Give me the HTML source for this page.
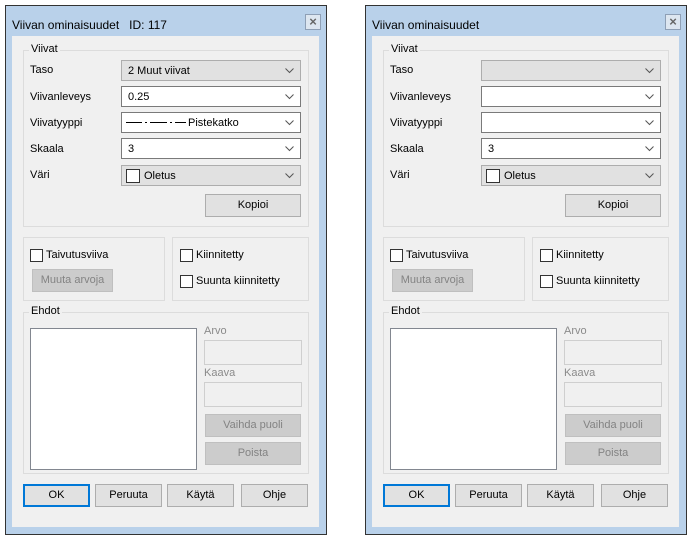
<!DOCTYPE html>
<html><head><meta charset="utf-8"><style>
*{box-sizing:border-box;margin:0;padding:0}
body{width:694px;height:541px;background:#fff;position:relative;overflow:hidden;font-family:"Liberation Sans",Arial,sans-serif;font-size:11px;color:#000}
.dlg{position:absolute;top:5px;width:322px;height:530px;border:1px solid #333;background:#b9d1ea}
.a{position:absolute}
.t{position:absolute;left:6px;top:12px;font-size:12px}
.x{position:absolute;left:299px;top:8px;width:16px;height:16px;border:1px solid #8e9fb5;background:#dde6f0;font-size:13px;line-height:13px;text-align:center;color:#666;font-weight:bold}
.gb{position:absolute;border:1px solid #dcdcdc}
.gl{position:absolute;background:#f0f0f0;padding:0 2px;top:-8px;left:5px}
.cb{position:absolute;width:180px;height:21px;border:1px solid #7a7a7a;background:#fff;padding:3px 6px;line-height:14px}
.cb.g{background:#e1e1e1;border-color:#adadad}
.cb svg.ar{position:absolute;right:6px;top:7px}
.btn{position:absolute;height:23px;border:1px solid #adadad;background:#e1e1e1;text-align:center;line-height:21px}
.btn.d{background:#cccccc;border-color:#bfbfbf;color:#838383}
.chk{position:absolute;width:13px;height:13px;border:1px solid #333;background:#fff}
.dis{color:#8a8a8a}
.tb{position:absolute;width:98px;height:25px;border:1px solid #cfcfcf;background:#f0f0f0}
</style></head><body>

<div class="dlg" style="left:5px">
<div class="t">Viivan ominaisuudet &nbsp; ID: 117</div>
<div class="x">×</div>
</div>
<div class="dlg" style="left:365px">
<div class="t">Viivan ominaisuudet</div>
<div class="x">×</div>
</div>

<div class="a" style="left:0;top:0;width:330px;height:541px">
<div class="a" style="left:12px;top:36px;width:307px;height:491px;background:#f0f0f0"></div>
<div class="gb" style="left:23px;top:50px;width:286px;height:177px"><span class="gl">Viivat</span></div>
<div class="a" style="left:30px;top:64px">Taso</div>
<div class="a" style="left:30px;top:91px">Viivanleveys</div>
<div class="a" style="left:30px;top:117px">Viivatyyppi</div>
<div class="a" style="left:30px;top:143px">Skaala</div>
<div class="a" style="left:30px;top:169px">Väri</div>
<div class="cb g" style="left:121px;top:60px">2 Muut viivat<svg class="ar" width="9" height="6"><path d="M0.5 0.5L4.5 4.5L8.5 0.5" fill="none" stroke="#555"/></svg></div>
<div class="cb" style="left:121px;top:86px">0.25<svg class="ar" width="9" height="6"><path d="M0.5 0.5L4.5 4.5L8.5 0.5" fill="none" stroke="#555"/></svg></div>
<div class="cb" style="left:121px;top:112px"><svg width="60" height="4" style="position:absolute;left:4px;top:8px"><path d="M0 1.5H16M19 1.5H21M24 1.5H41M44 1.5H46M49 1.5H60" stroke="#000" stroke-width="1"/></svg><span style="position:absolute;left:66px;top:3px">Pistekatko</span><svg class="ar" width="9" height="6"><path d="M0.5 0.5L4.5 4.5L8.5 0.5" fill="none" stroke="#555"/></svg></div>
<div class="cb" style="left:121px;top:138px">3<svg class="ar" width="9" height="6"><path d="M0.5 0.5L4.5 4.5L8.5 0.5" fill="none" stroke="#555"/></svg></div>
<div class="cb g" style="left:121px;top:165px;padding-left:22px">Oletus<span class="chk" style="left:4px;top:3px;width:14px;height:14px"></span><svg class="ar" width="9" height="6"><path d="M0.5 0.5L4.5 4.5L8.5 0.5" fill="none" stroke="#555"/></svg></div>
<div class="btn" style="left:205px;top:194px;width:96px">Kopioi</div>
<div class="gb" style="left:23px;top:237px;width:142px;height:64px"></div>
<div class="gb" style="left:172px;top:237px;width:137px;height:64px"></div>
<div class="chk" style="left:30px;top:249px"></div><div class="a" style="left:46px;top:249px">Taivutusviiva</div>
<div class="btn d" style="left:32px;top:269px;width:81px">Muuta arvoja</div>
<div class="chk" style="left:180px;top:249px"></div><div class="a" style="left:196px;top:249px">Kiinnitetty</div>
<div class="chk" style="left:180px;top:275px"></div><div class="a" style="left:196px;top:275px">Suunta kiinnitetty</div>
<div class="gb" style="left:23px;top:312px;width:286px;height:162px"><span class="gl">Ehdot</span></div>
<div class="a" style="left:30px;top:328px;width:167px;height:142px;border:1px solid #828790;background:#fff"></div>
<div class="a dis" style="left:204px;top:325px">Arvo</div>
<div class="tb" style="left:204px;top:340px"></div>
<div class="a dis" style="left:204px;top:367px">Kaava</div>
<div class="tb" style="left:204px;top:382px"></div>
<div class="btn d" style="left:205px;top:414px;width:96px">Vaihda puoli</div>
<div class="btn d" style="left:205px;top:442px;width:96px">Poista</div>
<div class="btn" style="left:23px;top:484px;width:67px;border:2px solid #0078d7;line-height:19px">OK</div>
<div class="btn" style="left:95px;top:484px;width:67px">Peruuta</div>
<div class="btn" style="left:167px;top:484px;width:67px">Käytä</div>
<div class="btn" style="left:241px;top:484px;width:67px">Ohje</div>
</div>

<div class="a" style="left:360px;top:0;width:330px;height:541px">
<div class="a" style="left:12px;top:36px;width:307px;height:491px;background:#f0f0f0"></div>
<div class="gb" style="left:23px;top:50px;width:286px;height:177px"><span class="gl">Viivat</span></div>
<div class="a" style="left:30px;top:64px">Taso</div>
<div class="a" style="left:30px;top:91px">Viivanleveys</div>
<div class="a" style="left:30px;top:117px">Viivatyyppi</div>
<div class="a" style="left:30px;top:143px">Skaala</div>
<div class="a" style="left:30px;top:169px">Väri</div>
<div class="cb g" style="left:121px;top:60px"><svg class="ar" width="9" height="6"><path d="M0.5 0.5L4.5 4.5L8.5 0.5" fill="none" stroke="#555"/></svg></div>
<div class="cb" style="left:121px;top:86px"><svg class="ar" width="9" height="6"><path d="M0.5 0.5L4.5 4.5L8.5 0.5" fill="none" stroke="#555"/></svg></div>
<div class="cb" style="left:121px;top:112px"><svg class="ar" width="9" height="6"><path d="M0.5 0.5L4.5 4.5L8.5 0.5" fill="none" stroke="#555"/></svg></div>
<div class="cb" style="left:121px;top:138px">3<svg class="ar" width="9" height="6"><path d="M0.5 0.5L4.5 4.5L8.5 0.5" fill="none" stroke="#555"/></svg></div>
<div class="cb g" style="left:121px;top:165px;padding-left:22px">Oletus<span class="chk" style="left:4px;top:3px;width:14px;height:14px"></span><svg class="ar" width="9" height="6"><path d="M0.5 0.5L4.5 4.5L8.5 0.5" fill="none" stroke="#555"/></svg></div>
<div class="btn" style="left:205px;top:194px;width:96px">Kopioi</div>
<div class="gb" style="left:23px;top:237px;width:142px;height:64px"></div>
<div class="gb" style="left:172px;top:237px;width:137px;height:64px"></div>
<div class="chk" style="left:30px;top:249px"></div><div class="a" style="left:46px;top:249px">Taivutusviiva</div>
<div class="btn d" style="left:32px;top:269px;width:81px">Muuta arvoja</div>
<div class="chk" style="left:180px;top:249px"></div><div class="a" style="left:196px;top:249px">Kiinnitetty</div>
<div class="chk" style="left:180px;top:275px"></div><div class="a" style="left:196px;top:275px">Suunta kiinnitetty</div>
<div class="gb" style="left:23px;top:312px;width:286px;height:162px"><span class="gl">Ehdot</span></div>
<div class="a" style="left:30px;top:328px;width:167px;height:142px;border:1px solid #828790;background:#fff"></div>
<div class="a dis" style="left:204px;top:325px">Arvo</div>
<div class="tb" style="left:204px;top:340px"></div>
<div class="a dis" style="left:204px;top:367px">Kaava</div>
<div class="tb" style="left:204px;top:382px"></div>
<div class="btn d" style="left:205px;top:414px;width:96px">Vaihda puoli</div>
<div class="btn d" style="left:205px;top:442px;width:96px">Poista</div>
<div class="btn" style="left:23px;top:484px;width:67px;border:2px solid #0078d7;line-height:19px">OK</div>
<div class="btn" style="left:95px;top:484px;width:67px">Peruuta</div>
<div class="btn" style="left:167px;top:484px;width:67px">Käytä</div>
<div class="btn" style="left:241px;top:484px;width:67px">Ohje</div>
</div>
</body></html>
